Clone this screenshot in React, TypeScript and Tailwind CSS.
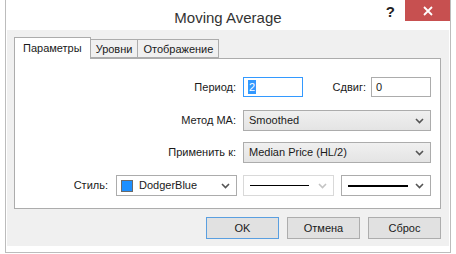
import React from 'react';

const font = { fontFamily: '"Liberation Sans", Arial, sans-serif' };

const Chevron = ({ disabled = false }: { disabled?: boolean }) => (
  <svg width="9" height="6" viewBox="0 0 9 6" className="shrink-0">
    <path
      d="M1 1 L4.5 4.5 L8 1"
      fill="none"
      stroke={disabled ? '#c4c4c4' : '#555'}
      strokeWidth="1.6"
    />
  </svg>
);

const Tab = ({ label, active }: { label: string; active?: boolean }) =>
  active ? (
    <div className="h-[22px] px-[8px] bg-white border border-b-0 border-[#acacac] flex items-center -mb-px relative z-10">
      {label}
    </div>
  ) : (
    <div className="h-[19px] px-[5px] bg-[#f0f0f0] border border-[#acacac] border-l-0 flex items-center pt-px">
      {label}
    </div>
  );

const GraySelect = ({ value }: { value: string }) => (
  <div className="w-[188px] h-[21px] bg-gradient-to-b from-[#f0f0f0] to-[#e4e4e4] border border-[#acacac] flex items-center justify-between pl-[5px] pr-[6px]">
    <span>{value}</span>
    <Chevron />
  </div>
);

const Button = ({ label, focused }: { label: string; focused?: boolean }) => (
  <div
    className={
      'w-[73px] h-[22px] flex items-center justify-center bg-[#e1e1e1] border ' +
      (focused ? 'border-[#5a9fe0]' : 'border-[#adadad]')
    }
  >
    {label}
  </div>
);

export default function App() {
  return (
    <div className="w-[456px] h-[254px] bg-white text-[11px] text-[#1a1a1a]" style={font}>
      <div className="ml-[5px] w-[446px] h-[253px] border-x border-b border-[#bcbcbc] bg-white flex flex-col">
        {/* title bar */}
        <div className="h-[30px] grid grid-cols-[1fr_auto_1fr]">
          <div />
          <div className="text-[15px] text-[#333] pt-[7px]">Moving Average</div>
          <div className="flex justify-end items-start">
            <div className="text-[15px] font-bold text-[#222] mt-[1px] mr-[10px]">?</div>
            <div className="w-[45px] h-[21px] bg-[#c75050] flex items-center justify-center">
              <svg width="10" height="10" viewBox="0 0 10 10">
                <path d="M1 1 L9 9 M9 1 L1 9" stroke="white" strokeWidth="1.8" />
              </svg>
            </div>
          </div>
        </div>

        {/* client area */}
        <div className="mx-[1px] h-[216px] bg-[#f0f0f0] pt-[7px] pl-[7px]">
          <div className="flex items-end">
            <Tab label="Параметры" active />
            <Tab label="Уровни" />
            <Tab label="Отображение" />
          </div>
          <div className="w-[427px] h-[151px] bg-white border border-[#acacac] flex flex-col pt-[18px]">
            <div className="flex items-center h-[20px]">
              <div className="w-[221px] text-right">Период:</div>
              <div className="ml-[7px] w-[60px] h-[20px] border border-[#3399ff] flex items-center pl-[4px]">
                <span className="bg-[#3399ff] text-white leading-[14px] px-px">2</span>
              </div>
              <div className="w-[63px] text-right">Сдвиг:</div>
              <div className="ml-[5px] w-[60px] h-[20px] border border-[#acacac] flex items-center pl-[4px]">0</div>
            </div>
            <div className="flex items-center mt-[13px]">
              <div className="w-[221px] text-right">Метод MA:</div>
              <div className="ml-[7px]">
                <GraySelect value="Smoothed" />
              </div>
            </div>
            <div className="flex items-center mt-[11px]">
              <div className="w-[221px] text-right">Применить к:</div>
              <div className="ml-[7px]">
                <GraySelect value="Median Price (HL/2)" />
              </div>
            </div>
            <div className="flex items-center mt-[12px]">
              <div className="w-[93px] text-right">Стиль:</div>
              <div className="ml-[8px] w-[121px] h-[21px] border border-[#acacac] flex items-center pl-[4px] pr-[6px]">
                <div className="w-[12px] h-[12px] bg-[#1e90ff] border border-[#6a6a6a]" />
                <span className="ml-[6px] flex-1">DodgerBlue</span>
                <Chevron />
              </div>
              <div className="ml-[6px] w-[91px] h-[21px] border border-[#d9d9d9] flex items-center pl-[6px] pr-[6px]">
                <div className="w-[59px] h-px bg-black" />
                <div className="flex-1" />
                <Chevron disabled />
              </div>
              <div className="ml-[7px] w-[90px] h-[21px] border border-[#acacac] flex items-center pl-[6px] pr-[6px]">
                <div className="w-[60px] h-[2px] bg-black" />
                <div className="flex-1" />
                <Chevron />
              </div>
            </div>
          </div>
          <div className="flex justify-end gap-[8px] mt-[8px] pr-[8px]">
            <Button label="OK" focused />
            <Button label="Отмена" />
            <Button label="Сброс" />
          </div>
        </div>
      </div>
    </div>
  );
}
